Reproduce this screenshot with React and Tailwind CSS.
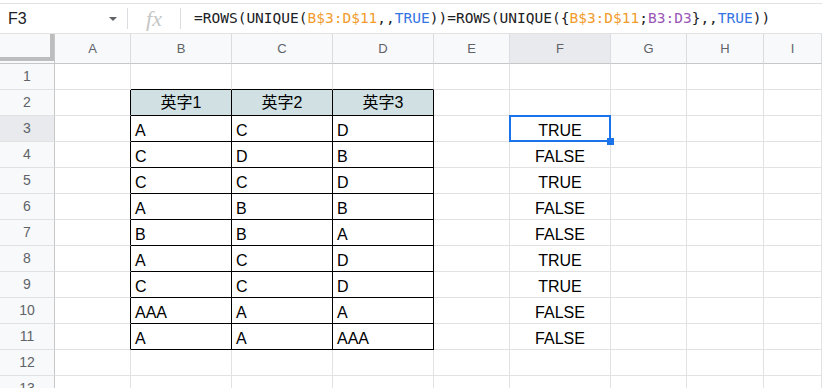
import React from 'react';

const COLS = ['A', 'B', 'C', 'D', 'E', 'F', 'G', 'H', 'I'];

const DATA = {
    2: ['英字1', '英字2', '英字3'],
    3: ['A', 'C', 'D'],
    4: ['C', 'D', 'B'],
    5: ['C', 'C', 'D'],
    6: ['A', 'B', 'B'],
    7: ['B', 'B', 'A'],
    8: ['A', 'C', 'D'],
    9: ['C', 'C', 'D'],
    10: ['AAA', 'A', 'A'],
    11: ['A', 'A', 'AAA'],
};

const RESULT = {
    3: 'TRUE', 4: 'FALSE', 5: 'TRUE', 6: 'FALSE', 7: 'FALSE',
    8: 'TRUE', 9: 'TRUE', 10: 'FALSE', 11: 'FALSE',
};

const inTable = (r, c) => r >= 2 && r <= 11 && c >= 1 && c <= 3;

const Cell = ({ r, c }) => {
    const table = inTable(r, c);
    const leftOfTable = c === 0 && r >= 2 && r <= 11;
    const aboveTable = r === 1 && c >= 1 && c <= 3;

    let border = 'border-r border-b border-[#e2e2e2]';
    if (table) border = 'border-r border-b border-black';
    else if (leftOfTable) border = 'border-r border-r-black border-b border-b-[#e2e2e2]';
    else if (aboveTable) border = 'border-r border-r-[#e2e2e2] border-b border-b-black';

    let content = null;
    let cls = '';
    if (table) {
        const v = DATA[r][c - 1];
        if (r === 2) {
            cls = 'bg-[#d0e0e3] justify-center items-center';
            content = <span className="text-[16px] leading-[20px]">{v}</span>;
        } else {
            cls = 'items-end pl-[4px] pb-[1px]';
            content = <span className="text-[16px] leading-[18px]">{v}</span>;
        }
    }
    if (c === 5 && RESULT[r]) {
        cls = 'items-end justify-center pb-[1px]';
        content = <span className="text-[16px] leading-[18px]">{RESULT[r]}</span>;
    }

    return (
        <div className={`relative flex h-[26px] overflow-visible ${border} ${cls}`}>
            {content}
            {r === 3 && c === 5 && (
                <>
                    <div className="absolute -left-[1px] -top-[1px] -right-[1px] -bottom-[1px] border-2 border-[#1a73e8] z-10"></div>
                    <div className="absolute -right-[4px] -bottom-[4px] w-[7px] h-[7px] bg-[#1a73e8] z-20"></div>
                </>
            )}
        </div>
    );
};

export default function App() {
    const rows = Array.from({ length: 13 }, (_, i) => i + 1);

    return (
        <div className="w-[822px] h-[388px] overflow-hidden bg-white text-[#000]" style={{ fontFamily: '"Liberation Sans", Arial, "Noto Sans CJK JP", sans-serif' }}>
            {/* Formula bar */}
            <div className="pt-[3px]">
                <div className="flex items-center h-[31px] border-y border-[#e2e2e2]">
                    <div className="w-[127px] flex items-center justify-between pl-[8px] pr-[10px]">
                        <span className="text-[16px] text-[#202124]">F3</span>
                        <svg width="8" height="4" viewBox="0 0 8 4" className="mt-[1px]">
                            <path d="M0 0 L8 0 L4 4 Z" fill="#5f6368" />
                        </svg>
                    </div>
                    <div className="w-px h-[21px] bg-[#dadce0]"></div>
                    <div className="w-[52px] flex justify-center">
                        <span className="italic text-[22px] leading-[22px] text-[#c6c6c6]" style={{ fontFamily: '"Liberation Serif", serif' }}>fx</span>
                    </div>
                    <div className="w-px h-[21px] bg-[#dadce0]"></div>
                    <div className="pl-[13px] text-[14.5px] whitespace-nowrap text-[#202124]" style={{ fontFamily: '"DejaVu Sans Mono", "Liberation Mono", monospace' }}>
                        =ROWS(UNIQUE(<span className="text-[#f29b2c]">B$3:D$11</span>,,<span className="text-[#3574e3]">TRUE</span>))=ROWS(UNIQUE({'{'}<span className="text-[#f29b2c]">B$3:D$11</span>;<span className="text-[#9a58b5]">B3:D3</span>{'}'},,<span className="text-[#3574e3]">TRUE</span>))
                    </div>
                </div>
            </div>

            {/* Grid */}
            <div className="grid grid-cols-[55px_76px_101px_101px_101px_76px_101px_76px_77px_1fr]">
                {/* Header row */}
                <div className="h-[30px] bg-[#f8f9fa] border-r border-b border-[#c7c7c7] flex">
                    <div className="w-[54px] h-[27px] border-r-4 border-b-4 border-[#bdbdbd]"></div>
                </div>
                {COLS.map((col) => (
                    <div
                        key={col}
                        className={`h-[30px] flex items-center justify-center text-[13px] text-[#5f6368] border-b border-b-[#c7c7c7] border-r border-r-[#dadce0] ${col === 'F' ? 'bg-[#e8eaed]' : 'bg-[#f8f9fa]'}`}
                    >
                        {col}
                    </div>
                ))}

                {rows.map((r) => (
                    <React.Fragment key={r}>
                        <div className={`h-[26px] flex items-center justify-center text-[14px] text-[#5f6368] border-r border-r-[#c7c7c7] border-b border-b-[#e2e2e2] ${r === 3 ? 'bg-[#e8eaed]' : 'bg-[#f8f9fa]'}`}>
                            {r}
                        </div>
                        {COLS.map((col, c) => (
                            <Cell key={col} r={r} c={c} />
                        ))}
                    </React.Fragment>
                ))}
            </div>
        </div>
    );
}
